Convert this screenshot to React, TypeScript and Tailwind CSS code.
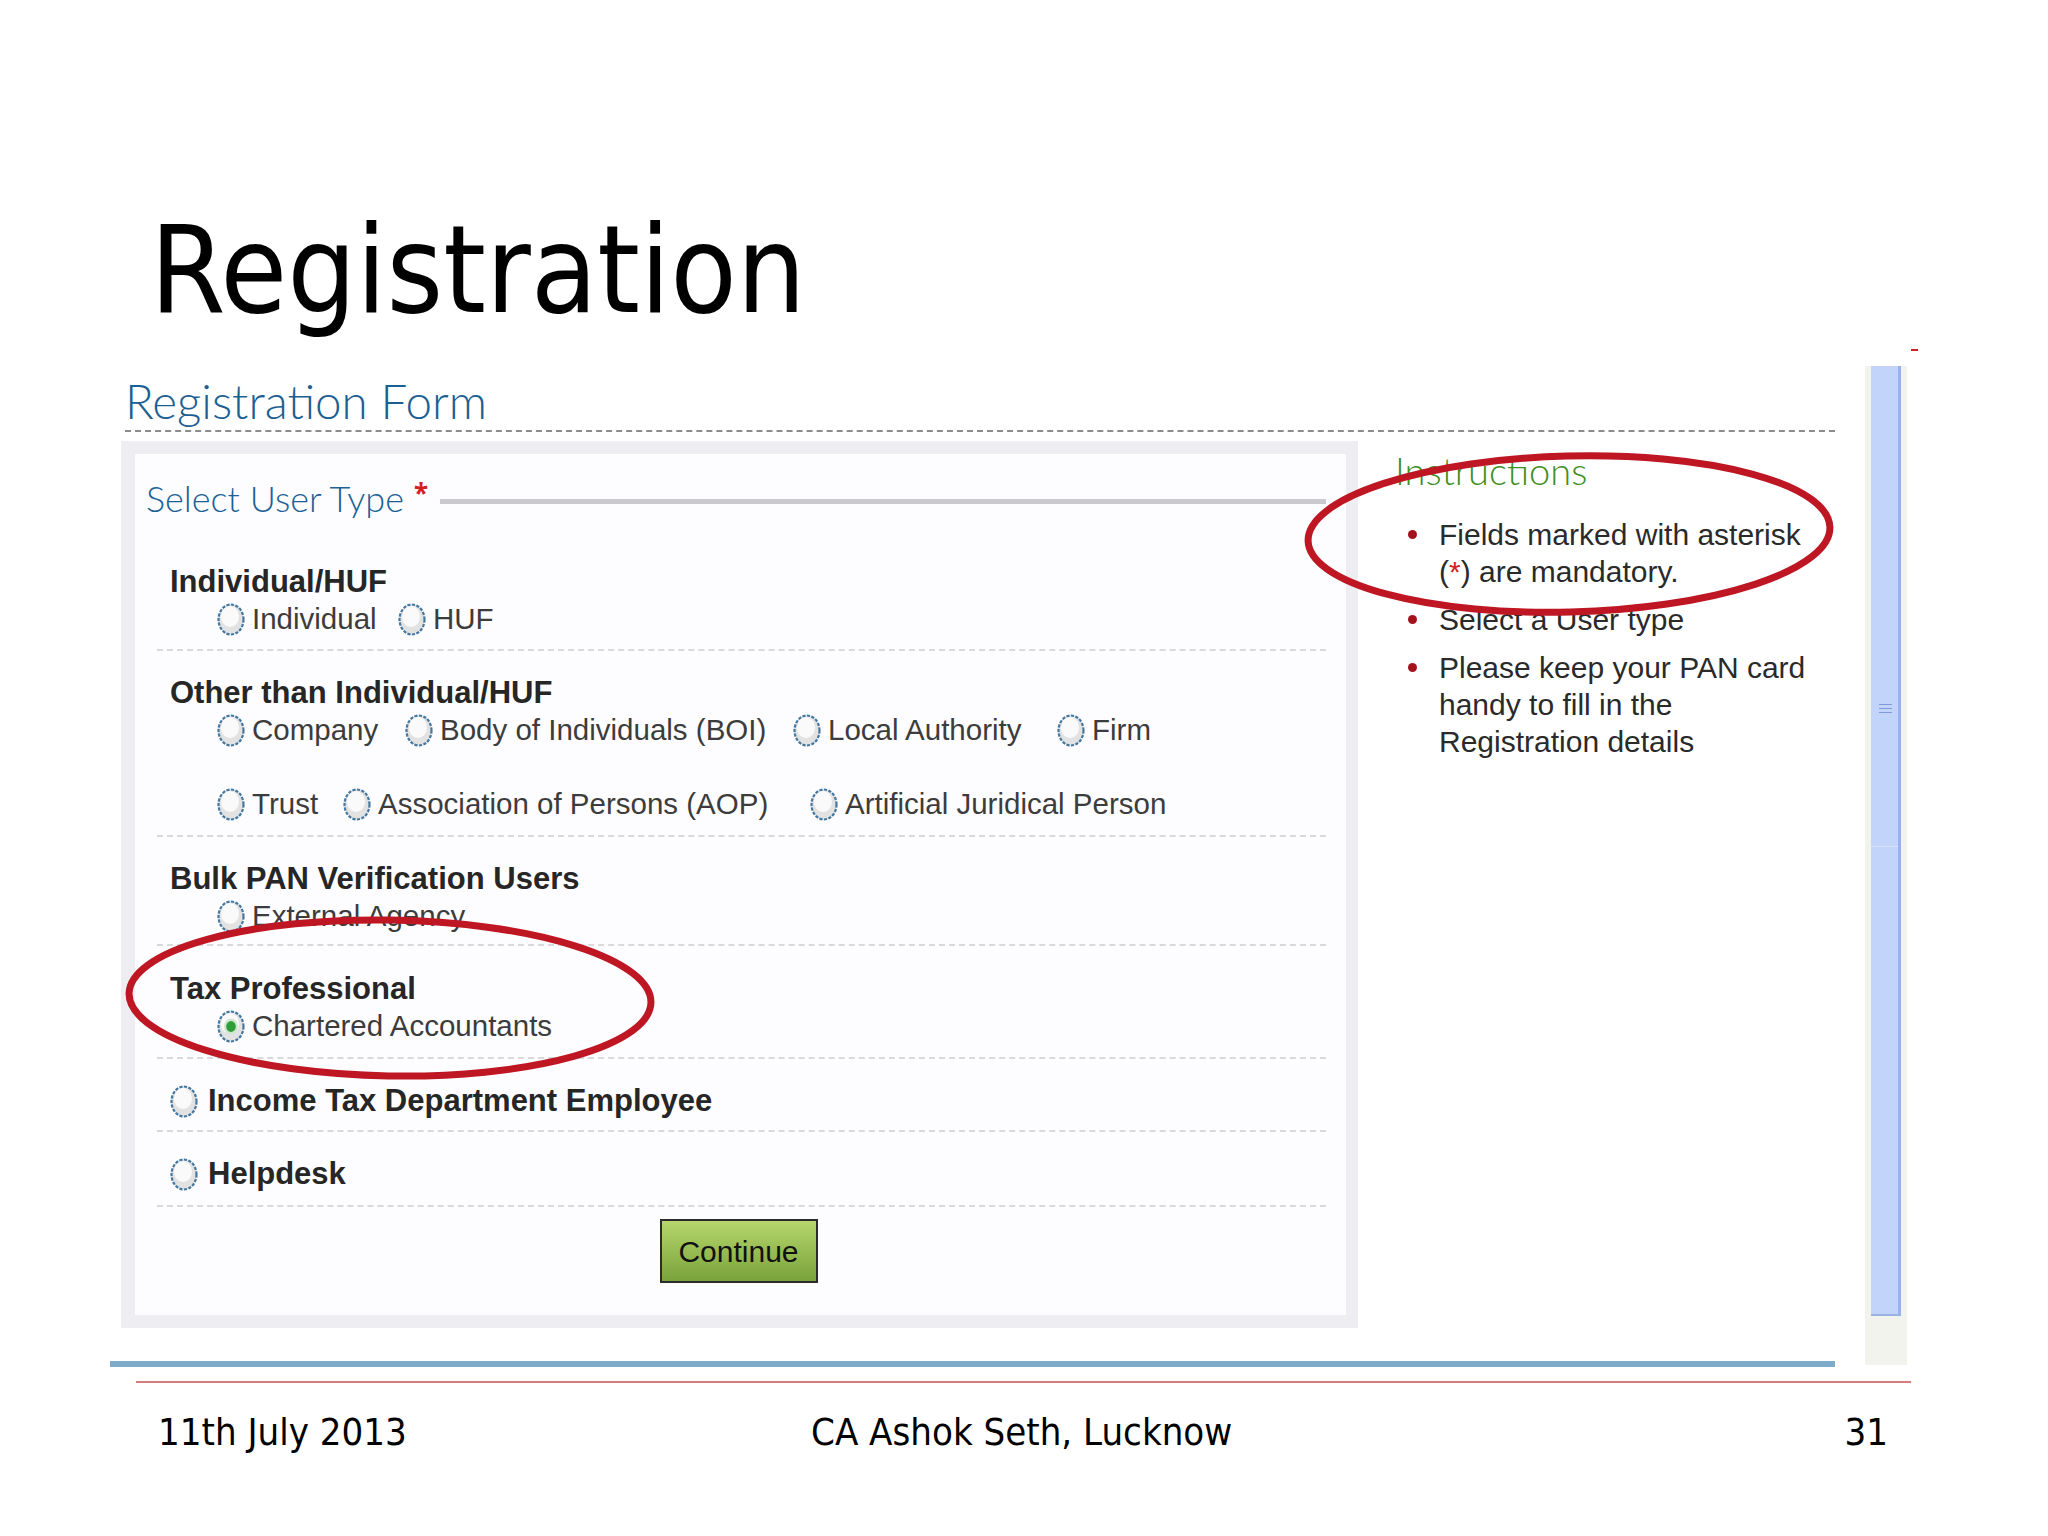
import React from "react";

const sans = "font-['Liberation_Sans',Arial,sans-serif]";
const condensed = "font-['DejaVu_Sans_Condensed','DejaVu_Sans',sans-serif]";

const Radio = ({ checked = false }: { checked?: boolean }) => (
  <svg width="28" height="33" viewBox="0 0 28 33" className="shrink-0">
    <ellipse cx="14" cy="16.5" rx="12.5" ry="15" fill="#e2e2e2" stroke="#46779f" strokeWidth="2.2" strokeDasharray="3.2 1.4" />
    <ellipse cx="13" cy="13.5" rx="9" ry="10.5" fill="#fafafa" />
    {checked && (
      <>
        <ellipse cx="14" cy="16.5" rx="7" ry="8" fill="#cfe6cf" />
        <ellipse cx="14" cy="16.5" rx="4.8" ry="5.4" fill="#2f9e3a" />
      </>
    )}
  </svg>
);

type Opt = { label: string; w?: string; checked?: boolean };

const RadioRow = ({ items }: { items: Opt[] }) => (
  <div className="h-[38px] flex items-center pl-[60px]">
    {items.map((it) => (
      <div key={it.label} className={`flex items-center shrink-0 ${it.w ?? ""}`}>
        <Radio checked={it.checked} />
        <span className={`ml-[7px] text-[29.5px] leading-[38px] text-[#3c3c3c] whitespace-nowrap ${sans}`}>
          {it.label}
        </span>
      </div>
    ))}
  </div>
);

const Heading = ({ children }: { children: React.ReactNode }) => (
  <div className={`h-[36px] pl-[13px] flex items-center text-[31px] leading-[36px] font-bold text-[#262626] whitespace-nowrap ${sans}`}>
    {children}
  </div>
);

const sectionCls = "ml-[22px] mr-[20px] border-b-2 border-dashed border-[#d9d9dc]";

const App = () => {
  return (
    <div className="relative w-[2048px] h-[1536px] bg-white overflow-hidden">
      <h1 className={`pl-[150px] pt-[210px] text-[121px] leading-[121px] text-black ${condensed}`}>
        Registration
      </h1>

      <div className="flex ml-[110px] mt-[35px] h-[1001px]">
        <div className="w-[1725px] flex flex-col">
          <div className="ml-[15px] h-[66px] pt-[10px] border-b-2 border-dashed border-[#8c8c8c] text-[47.5px] leading-[50px] font-['Lato',sans-serif] font-light text-[#1d5f93]">
            Registration Form
          </div>

          <div className="flex mt-[9px]">
            <div className="ml-[11px] w-[1237px] h-[887px] bg-[#eeeef2] pl-[14px] pt-[13px] pr-[12px] pb-[13px]">
              <div className="h-full bg-[#fdfdff] flex flex-col">
                <div className="h-[88px] flex items-center pl-[11px] pr-[20px]">
                  <span className="text-[36px] leading-[40px] font-['Lato',sans-serif] font-light text-[#1b6196] whitespace-nowrap">
                    Select User Type
                  </span>
                  <span className="ml-[10px] mb-[10px] text-[26px] leading-none text-[#d42020] font-bold">*</span>
                  <div className="ml-[12px] mt-[6px] flex-1 h-[5px] bg-[#c9c9ce]" />
                </div>

                <div className={`${sectionCls} pt-[22px] pb-[11px]`}>
                  <Heading>Individual/HUF</Heading>
                  <RadioRow items={[{ label: "Individual", w: "w-[181px]" }, { label: "HUF" }]} />
                </div>

                <div className={`${sectionCls} pt-[24px] pb-[12px]`}>
                  <Heading>Other than Individual/HUF</Heading>
                  <RadioRow
                    items={[
                      { label: "Company", w: "w-[188px]" },
                      { label: "Body of Individuals (BOI)", w: "w-[388px]" },
                      { label: "Local Authority", w: "w-[264px]" },
                      { label: "Firm" },
                    ]}
                  />
                  <div className="mt-[36px]">
                    <RadioRow
                      items={[
                        { label: "Trust", w: "w-[126px]" },
                        { label: "Association of Persons (AOP)", w: "w-[467px]" },
                        { label: "Artificial Juridical Person" },
                      ]}
                    />
                  </div>
                </div>

                <div className={`${sectionCls} pt-[24px] pb-[9px]`}>
                  <Heading>Bulk PAN Verification Users</Heading>
                  <RadioRow items={[{ label: "External Agency" }]} />
                </div>

                <div className={`${sectionCls} pt-[25px] pb-[12px]`}>
                  <Heading>Tax Professional</Heading>
                  <RadioRow items={[{ label: "Chartered Accountants", checked: true }]} />
                </div>

                <div className={`${sectionCls} pt-[24px] pb-[11px]`}>
                  <div className="h-[36px] pl-[13px] flex items-center">
                    <Radio />
                    <span className={`ml-[10px] text-[31px] leading-[36px] font-bold text-[#262626] whitespace-nowrap ${sans}`}>
                      Income Tax Department Employee
                    </span>
                  </div>
                </div>

                <div className={`${sectionCls} pt-[24px] pb-[13px]`}>
                  <div className="h-[36px] pl-[13px] flex items-center">
                    <Radio />
                    <span className={`ml-[10px] text-[31px] leading-[36px] font-bold text-[#262626] whitespace-nowrap ${sans}`}>
                      Helpdesk
                    </span>
                  </div>
                </div>

                <div className="ml-[22px] mr-[20px] flex justify-center">
                  <button
                    className={`mt-[12px] mr-[6px] w-[158px] h-[64px] border-2 border-[#2b2b2b] bg-linear-to-b from-[#b6d66c] to-[#7aa33b] text-[30px] text-[#111] ${sans}`}
                  >
                    Continue
                  </button>
                </div>
              </div>
            </div>

            <div className="ml-[37px] flex-1">
              <div className="h-[58px] flex items-center text-[38px] leading-[40px] font-['Lato',sans-serif] font-light text-[#3f8f1f]">
                Instructions
              </div>
              <ul className={`mt-[17px] space-y-[11px] text-[30px] leading-[37px] text-[#2a2a2a] ${sans}`}>
                <li className="flex">
                  <span className="mt-[14px] ml-[13px] w-[9px] h-[9px] rounded-full bg-[#a3121c] shrink-0" />
                  <span className="ml-[22px] whitespace-nowrap">
                    Fields marked with asterisk
                    <br />(<span className="text-[#d42020]">*</span>) are mandatory.
                  </span>
                </li>
                <li className="flex">
                  <span className="mt-[14px] ml-[13px] w-[9px] h-[9px] rounded-full bg-[#a3121c] shrink-0" />
                  <span className="ml-[22px] whitespace-nowrap">Select a User type</span>
                </li>
                <li className="flex">
                  <span className="mt-[14px] ml-[13px] w-[9px] h-[9px] rounded-full bg-[#a3121c] shrink-0" />
                  <span className="ml-[22px] whitespace-nowrap">
                    Please keep your PAN card
                    <br />
                    handy to fill in the
                    <br />
                    Registration details
                  </span>
                </li>
              </ul>
            </div>
          </div>

          <div className="mt-auto h-[6px] bg-[#7eabc9]" />
        </div>

        {/* scrollbar */}
        <div className="ml-[30px] w-[42px] h-[999px] bg-[#f3f3ee] flex flex-col px-[6px]">
          <div className="relative h-[950px] bg-[#c2d4fa] border-r-[3px] border-b-2 border-[#9ab3e6]">
            <div className="absolute left-0 right-0 top-[480px] h-px bg-[#d8e4fc]" />
            <div className="absolute left-[8px] top-[338px] w-[13px] flex flex-col gap-[3px]">
              <div className="h-px bg-[#7f9ad6]" />
              <div className="h-px bg-[#7f9ad6]" />
              <div className="h-px bg-[#7f9ad6]" />
            </div>
          </div>
        </div>
      </div>

      <div className="ml-[136px] mt-[14px] w-[1775px] h-[2px] bg-[#d77b7b]" />

      <div className={`ml-[158px] mt-[27px] w-[1730px] flex text-[38px] leading-[44px] text-black ${condensed}`}>
        <span className="w-[653px]">11th July 2013</span>
        <span className="flex-1">CA Ashok Seth, Lucknow</span>
        <span>31</span>
      </div>

      {/* hand-drawn annotation marks */}
      <svg className="absolute inset-0 pointer-events-none" width="2048" height="1536" viewBox="0 0 2048 1536">
        <ellipse cx="1569" cy="534" rx="261" ry="78" fill="none" stroke="#be1622" strokeWidth="7" transform="rotate(-1.5 1569 534)" />
        <ellipse cx="390" cy="998" rx="261" ry="78" fill="none" stroke="#be1622" strokeWidth="7" transform="rotate(1 390 998)" />
        <line x1="1911" y1="350" x2="1918" y2="350" stroke="#d42020" strokeWidth="2" />
      </svg>
    </div>
  );
};

export default App;
